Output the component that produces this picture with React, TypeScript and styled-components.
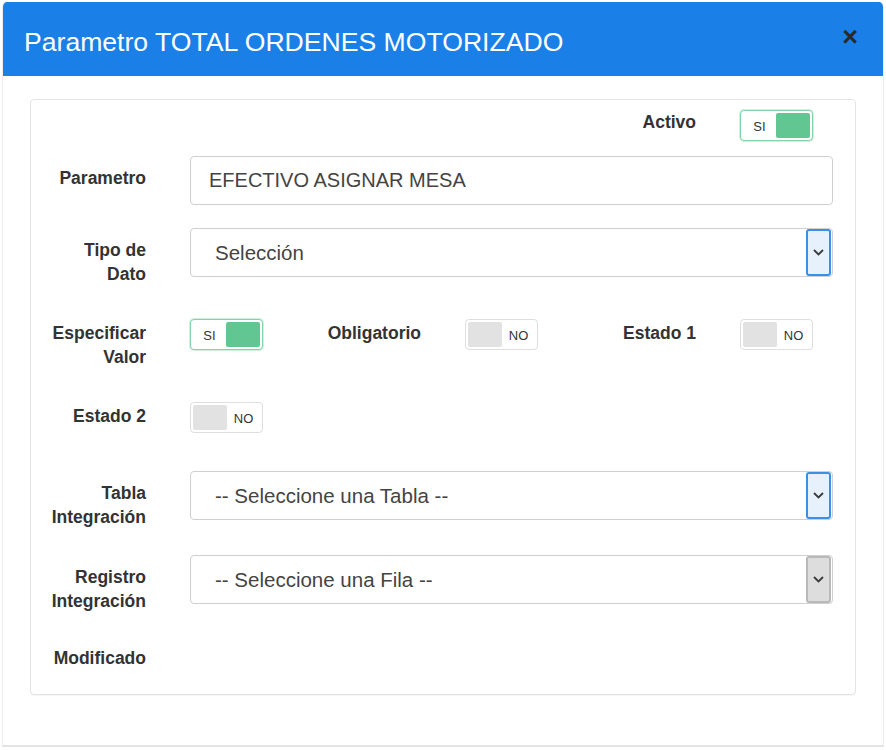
import React from "react";
import styled, { createGlobalStyle } from "styled-components";

const Global = createGlobalStyle`
  body {
    margin: 0;
    background: #fff;
    font-family: "Liberation Sans", Arial, sans-serif;
  }
`;

const Modal = styled.div`
  margin: 2px 2px 0;
  width: 882px;
  height: 745px;
  box-sizing: border-box;
  background: #fff;
  border-left: 1px solid #ececec;
  border-right: 1px solid #ececec;
  border-bottom: 2px solid #e3e3e3;
  border-radius: 5px 5px 0 0;
  overflow: hidden;
  display: flex;
  flex-direction: column;
`;

const Header = styled.div`
  height: 74px;
  flex: none;
  box-sizing: border-box;
  background: #1a7fe6;
  display: flex;
  align-items: center;
  justify-content: space-between;
  padding: 6px 25px 0 21px;
`;

const Title = styled.h4`
  margin: 0;
  font-size: 26.6px;
  font-weight: 400;
  color: #fff;
`;

const Close = styled.button`
  border: 0;
  background: none;
  padding: 0;
  margin-top: -10px;
  font-family: "Liberation Sans", Arial, sans-serif;
  font-size: 27px;
  font-weight: 700;
  line-height: 1;
  color: #2a2a2a;
  cursor: pointer;
`;

const Body = styled.div`
  padding: 23px 27px 0;
`;

const Panel = styled.div`
  border: 1px solid #e3e3e3;
  border-radius: 4px;
  padding: 10px 22px 24px 0;
  box-shadow: 0 1px 1px rgba(0, 0, 0, 0.04);
`;

const Row = styled.div<{ $mb: number }>`
  display: grid;
  grid-template-columns: 115px 1fr;
  column-gap: 44px;
  align-items: start;
  margin-bottom: ${(p) => p.$mb}px;
`;

const TripleRow = styled.div<{ $mb: number }>`
  display: grid;
  grid-template-columns: repeat(3, 275px);
  align-items: start;
  margin-bottom: ${(p) => p.$mb}px;
`;

const Slot = styled.div`
  display: grid;
  grid-template-columns: 115px auto;
  column-gap: 44px;
  align-items: start;
  justify-content: start;
`;

const Label = styled.label<{ $pt: number }>`
  display: block;
  text-align: right;
  font-weight: 700;
  font-size: 17.5px;
  line-height: 24px;
  color: #333;
  padding-top: ${(p) => p.$pt}px;
`;

const ToggleBox = styled.div<{ $on: boolean }>`
  width: 73px;
  height: 31px;
  box-sizing: border-box;
  border: 1px solid ${(p) => (p.$on ? "#7fd3a4" : "#dedede")};
  border-radius: 4px;
  background: #fff;
  padding: 2px;
  display: flex;
  flex-direction: ${(p) => (p.$on ? "row" : "row-reverse")};
  align-items: stretch;
  box-shadow: ${(p) => (p.$on ? "0 0 0 1px rgba(127, 211, 164, 0.35)" : "none")};
`;

const Knob = styled.span<{ $on: boolean }>`
  width: 34px;
  border-radius: 2px;
  background: ${(p) => (p.$on ? "#62c693" : "#e2e2e2")};
`;

const ToggleText = styled.span`
  flex: 1;
  display: flex;
  align-items: center;
  justify-content: center;
  padding-top: 2px;
  font-size: 13px;
  color: #333;
`;

const Input = styled.div`
  height: 49px;
  box-sizing: border-box;
  border: 1px solid #cfcfcf;
  border-radius: 4px;
  padding: 0 18px;
  display: flex;
  align-items: center;
  font-size: 20px;
  color: #444;
`;

const Select = styled.div`
  height: 49px;
  box-sizing: border-box;
  border: 1px solid #cfcfcf;
  border-radius: 4px;
  padding: 0 1px 0 24px;
  display: flex;
  align-items: stretch;
  font-size: 20.5px;
  color: #444;
`;

const SelectText = styled.span`
  flex: 1;
  display: flex;
  align-items: center;
`;

const Arrow = styled.span<{ $disabled?: boolean }>`
  width: 25px;
  box-sizing: border-box;
  border: 2px solid ${(p) => (p.$disabled ? "#b9b9b9" : "#3b8fe4")};
  border-radius: 3px;
  background: ${(p) => (p.$disabled ? "#dddddd" : "#e6f1fc")};
  display: flex;
  align-items: center;
  justify-content: center;
`;

const Chevron = () => (
  <svg width="11" height="7" viewBox="0 0 11 7">
    <path d="M1 1l4.5 4.5L10 1" fill="none" stroke="#3a3a3a" strokeWidth="1.8" />
  </svg>
);

const Toggle = ({ on }: { on: boolean }) => (
  <ToggleBox $on={on}>
    <ToggleText>{on ? "SI" : "NO"}</ToggleText>
    <Knob $on={on} />
  </ToggleBox>
);

const Dropdown = ({ text, disabled }: { text: string; disabled?: boolean }) => (
  <Select>
    <SelectText>{text}</SelectText>
    <Arrow $disabled={disabled}>
      <Chevron />
    </Arrow>
  </Select>
);

export default function App() {
  return (
    <>
      <Global />
      <Modal>
        <Header>
          <Title>Parametro TOTAL ORDENES MOTORIZADO</Title>
          <Close aria-label="Cerrar">×</Close>
        </Header>
        <Body>
          <Panel>
            <TripleRow $mb={15}>
              <Slot />
              <Slot />
              <Slot>
                <Label $pt={0}>Activo</Label>
                <Toggle on />
              </Slot>
            </TripleRow>

            <Row $mb={23}>
              <Label $pt={10}>Parametro</Label>
              <Input>EFECTIVO ASIGNAR MESA</Input>
            </Row>

            <Row $mb={33}>
              <Label $pt={10}>
                Tipo de
                <br />
                Dato
              </Label>
              <Dropdown text="Selección" />
            </Row>

            <TripleRow $mb={33}>
              <Slot>
                <Label $pt={2}>
                  Especificar
                  <br />
                  Valor
                </Label>
                <Toggle on />
              </Slot>
              <Slot>
                <Label $pt={2}>Obligatorio</Label>
                <Toggle on={false} />
              </Slot>
              <Slot>
                <Label $pt={2}>Estado 1</Label>
                <Toggle on={false} />
              </Slot>
            </TripleRow>

            <TripleRow $mb={38}>
              <Slot>
                <Label $pt={2}>Estado 2</Label>
                <Toggle on={false} />
              </Slot>
            </TripleRow>

            <Row $mb={26}>
              <Label $pt={10}>
                Tabla
                <br />
                Integración
              </Label>
              <Dropdown text="-- Seleccione una Tabla --" />
            </Row>

            <Row $mb={31}>
              <Label $pt={10}>
                Registro
                <br />
                Integración
              </Label>
              <Dropdown text="-- Seleccione una Fila --" disabled />
            </Row>

            <Row $mb={0}>
              <Label $pt={2}>Modificado</Label>
            </Row>
          </Panel>
        </Body>
      </Modal>
    </>
  );
}
